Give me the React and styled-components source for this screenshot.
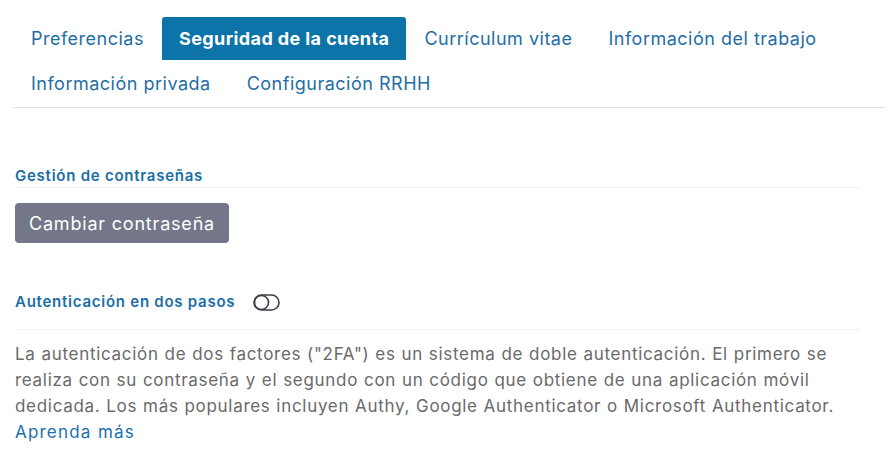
import React from "react";
import styled, { createGlobalStyle } from "styled-components";

const Global = createGlobalStyle`
  html, body { margin: 0; padding: 0; background: #fff; }
  body { font-family: "Inter", "Open Sans", sans-serif; }
`;

const Page = styled.div`
  padding: 17px 6px 0 13px;
`;

const TabBar = styled.nav`
  display: flex;
  flex-wrap: wrap;
  row-gap: 2px;
  border-bottom: 1px solid #e2e2e2;
  padding-bottom: 2px;
`;

const Tab = styled.div`
  height: 43px;
  display: flex;
  align-items: center;
  padding: 0 ${(p) => (p.$active ? "17px" : "18px")};
  font-size: 18px;
  letter-spacing: ${(p) => (p.$active ? "0.4px" : "0.5px")};
  color: ${(p) => (p.$active ? "#fff" : "#1f6ea5")};
  background: ${(p) => (p.$active ? "#0c74a9" : "transparent")};
  font-weight: ${(p) => (p.$active ? 700 : 400)};
  border-radius: 3px 3px 0 0;
  white-space: nowrap;
`;

const Content = styled.div`
  padding: 0 25px 0 2px;
`;

const SectionTitle = styled.div`
  display: flex;
  align-items: center;
  gap: 18px;
  font-size: 15px;
  letter-spacing: 0.75px;
  font-weight: 600;
  color: #1b6ea4;
  border-bottom: 1px solid #efefef;
  padding-bottom: ${(p) => p.$pb || "1px"};
  margin-top: ${(p) => p.$mt || "0"};
  line-height: 20px;
`;

const Button = styled.button`
  margin-top: 15px;
  height: 40px;
  padding: 0 14px;
  border: none;
  border-radius: 4px;
  background: #737789;
  color: #fff;
  font-family: inherit;
  font-size: 18px;
  letter-spacing: 0.8px;
  display: flex;
  align-items: center;
`;

const Paragraph = styled.p`
  margin: 11px 0 0 0;
  font-size: 17px;
  line-height: 26px;
  color: #6a6a6a;
  letter-spacing: 0.7px;
  word-spacing: 0.4px;
`;

const Link = styled.a`
  color: #1a6fad;
  text-decoration: none;
  letter-spacing: 1.2px;
`;

const Toggle = () => (
  <svg width="27" height="17" viewBox="0 0 27 17">
    <rect x="1" y="1" width="25" height="15" rx="7.5" fill="none" stroke="#3a3f4a" strokeWidth="1.6" />
    <circle cx="8.5" cy="8.5" r="7" fill="#fff" stroke="#3a3f4a" strokeWidth="1.6" />
  </svg>
);

const tabs = [
  "Preferencias",
  "Seguridad de la cuenta",
  "Currículum vitae",
  "Información del trabajo",
  "Información privada",
  "Configuración RRHH",
];

export default function App() {
  return (
    <Page>
      <Global />
      <TabBar>
        {tabs.map((t, i) => (
          <Tab key={t} $active={i === 1}>
            {t}
          </Tab>
        ))}
      </TabBar>
      <Content>
        <SectionTitle $mt="58px">Gestión de contraseñas</SectionTitle>
        <Button>Cambiar contraseña</Button>
        <SectionTitle $mt="49px" $pb="17px">
          Autenticación en dos pasos
          <Toggle />
        </SectionTitle>
        <Paragraph>
          La autenticación de dos factores ("2FA") es un sistema de doble autenticación. El primero se
          realiza con su contraseña y el segundo con un código que obtiene de una aplicación móvil
          dedicada. Los más populares incluyen Authy, Google Authenticator o Microsoft Authenticator.
          <br />
          <Link href="#">Aprenda más</Link>
        </Paragraph>
      </Content>
    </Page>
  );
}
